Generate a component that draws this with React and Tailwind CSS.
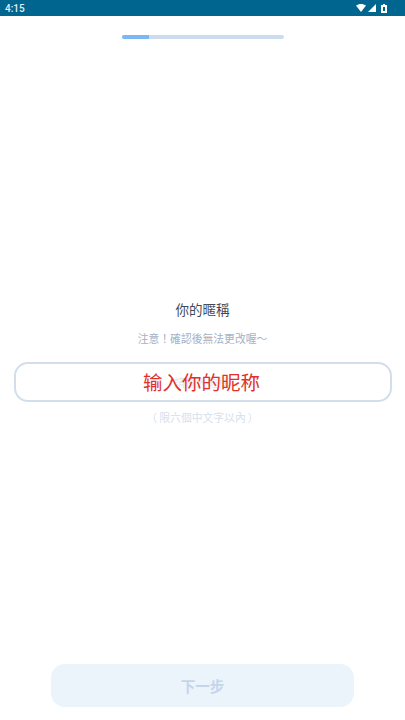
import React from 'react';

const cjk = 'font-["Noto_Sans_CJK_TC","Noto_Sans_CJK_SC",sans-serif]';

function StatusBar() {
    return (
        <div className="h-4 bg-[#00658f] flex items-center justify-between pl-[5px] pr-[18px] text-white">
            <span className='text-[10px] leading-[16px] pt-[1px] font-["Roboto",sans-serif] font-medium text-[#e6f0f5]'>4:15</span>
            <div className="flex items-center">
                <svg width="10" height="8" viewBox="0 0 10 8">
                    <path d="M0 1.6 C2.8 -0.5 7.2 -0.5 10 1.6 L5 8 Z" fill="#fff" />
                </svg>
                <svg width="8" height="8" viewBox="0 0 8 8" className="ml-[2px]">
                    <path d="M8 0 V8 H0 Z" fill="#fff" />
                </svg>
                <svg width="6" height="9" viewBox="0 0 6 9" className="ml-[5px]">
                    <path d="M2 0 H4 V1 H6 V9 H0 V1 H2 Z M2 3 V7 H4 V3 Z" fill="#fff" fillRule="evenodd" />
                </svg>
            </div>
        </div>
    );
}

export default function App() {
    return (
        <div className={`w-[405px] h-[720px] bg-white flex flex-col overflow-hidden ${cjk}`}>
            <StatusBar />

            {/* progress */}
            <div className="flex justify-center pt-[19px]">
                <div className="w-[162px] h-[4px] rounded-full bg-[#ccdcee] overflow-hidden">
                    <div className="w-[27px] h-full bg-[#7ab8f5]" />
                </div>
            </div>

            <div className="flex flex-col items-center pt-[260px]">
                <h1 className="text-[13.5px] leading-[20px] text-[#3f4a5a]">你的暱稱</h1>
                <p className="mt-[9px] text-[10.8px] leading-[20px] text-[#a3b1c6]">注意！確認後無法更改喔～</p>

                <div className="relative mt-[14px] w-[378px] h-[40px] rounded-[14px] border-2 border-[#d3deeb] flex items-center justify-center pr-[2px]">
                    <span className="absolute text-[11px] text-[#dfe7f1]">請輸入暱稱</span>
                    <span className='relative text-[19.5px] text-[#e2302a] font-["Noto_Sans_CJK_SC",sans-serif]'>输入你的昵称</span>
                </div>

                <p className="mt-[7px] text-[10.8px] leading-[16px] text-[#d5dfec]">（&thinsp;限六個中文字以內&thinsp;）</p>
            </div>

            <div className="mt-auto px-[51px] pb-[13px]">
                <button className="w-full h-[43px] rounded-[14px] bg-[#ebf3fb] text-[14.5px] font-bold text-[#c5d5e9]">下一步</button>
            </div>
        </div>
    );
}
